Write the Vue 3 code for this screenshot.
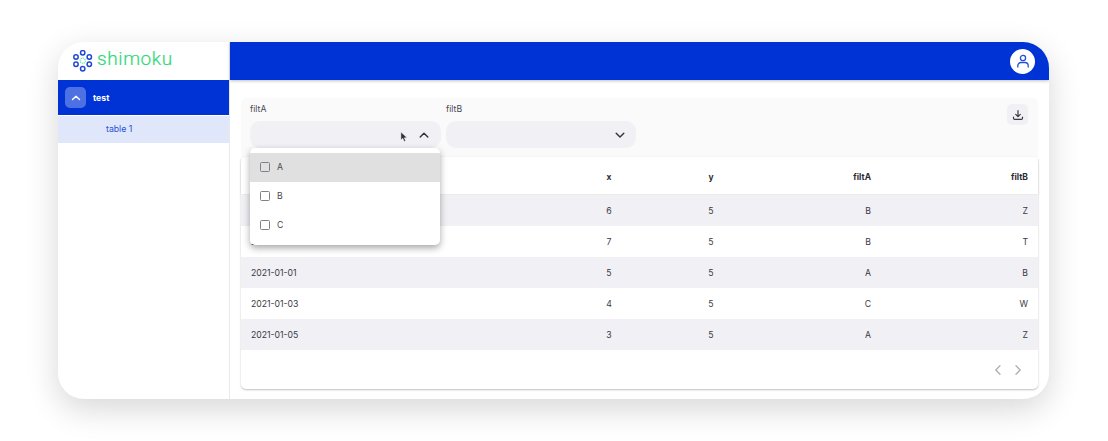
<script setup>
const rows = [
  { date: '2021-01-02', x: 6, y: 5, a: 'B', b: 'Z' },
  { date: '2021-01-04', x: 7, y: 5, a: 'B', b: 'T' },
  { date: '2021-01-01', x: 5, y: 5, a: 'A', b: 'B' },
  { date: '2021-01-03', x: 4, y: 5, a: 'C', b: 'W' },
  { date: '2021-01-05', x: 3, y: 5, a: 'A', b: 'Z' },
]
const options = ['A', 'B', 'C']
const rings = [[10.7, 2.7], [17.3, 7], [17.3, 14.3], [10.7, 18.7], [4, 14.3], [4, 7]]
</script>

<template>
  <div class="stage">
    <div class="window">
      <aside class="sidebar">
        <div class="logo">
          <svg class="logo-mark" width="22" height="22" viewBox="0 0 22 22" fill="none">
            <circle v-for="(r, i) in rings" :key="i" :cx="r[0]" :cy="r[1]" r="2.2" stroke="#1f48d4" stroke-width="1.5" />
            <circle cx="10.7" cy="10.7" r="2.6" stroke="#3ddc84" stroke-width="1.1" stroke-dasharray="1 1" />
          </svg>
          <span class="logo-text">shimoku</span>
        </div>
        <div class="nav-head">
          <span class="nav-toggle">
            <svg width="12" height="12" viewBox="0 0 12 12" fill="none"><path d="M2.5 7.5 6 4.200l3.500 3.300" stroke="#fff" stroke-width="1.400" stroke-linecap="round" stroke-linejoin="round" /></svg>
          </span>
          <span class="nav-title">test</span>
        </div>
        <div class="nav-item">table 1</div>
      </aside>

      <div class="main">
        <header class="topbar">
          <span class="avatar">
            <svg width="16" height="16" viewBox="0 0 16 16" fill="none">
              <circle cx="8" cy="5" r="2.600" stroke="#2450d8" stroke-width="1.300" />
              <path d="M2.800 14v-1.300A3.200 3.200 0 0 1 6 9.500h4a3.200 3.200 0 0 1 3.200 3.200V14" stroke="#2450d8" stroke-width="1.300" stroke-linecap="round" />
            </svg>
          </span>
        </header>

        <main class="content">
          <section class="filters">
            <div class="filter">
              <label class="filter-label">filtA</label>
              <div class="select">
                <svg class="cursor" width="8" height="12" viewBox="0 0 9 13"><path d="M1 1v9l2.200-2 1.500 3.500 1.600-.7L4.800 7.400H8z" fill="#333" stroke="#fff" stroke-width=".5" /></svg>
                <svg class="chev" width="14" height="14" viewBox="0 0 14 14" fill="none"><path d="M3.200 9 7 5.200 10.800 9" stroke="#333" stroke-width="1.400" stroke-linecap="round" stroke-linejoin="round" /></svg>
              </div>
              <ul class="menu">
                <li v-for="(o, i) in options" :key="o" class="option" :class="{ active: i === 0 }">
                  <span class="check"></span>{{ o }}
                </li>
              </ul>
            </div>
            <div class="filter second">
              <label class="filter-label">filtB</label>
              <div class="select">
                <svg class="chev" width="14" height="14" viewBox="0 0 14 14" fill="none"><path d="M3.200 5.200 7 9l3.800-3.800" stroke="#333" stroke-width="1.400" stroke-linecap="round" stroke-linejoin="round" /></svg>
              </div>
            </div>
            <button class="download" aria-label="download">
              <svg width="12" height="12" viewBox="0 0 12 12" fill="none">
                <path d="M6 1.500v6M3.700 5.300 6 7.600l2.300-2.300M1.500 8v1.200c0 .7.500 1.200 1.200 1.200h6.600c.7 0 1.200-.5 1.200-1.200V8" stroke="#3a3a44" stroke-width="1.200" stroke-linecap="round" stroke-linejoin="round" />
              </svg>
            </button>
          </section>

          <section class="card">
            <div class="row head">
              <span class="l">date</span><span class="c">x</span><span class="c">y</span><span class="r">filtA</span><span class="r">filtB</span>
            </div>
            <div v-for="(row, i) in rows" :key="i" class="row" :class="{ odd: i % 2 === 0 }">
              <span class="l">{{ row.date }}</span><span class="c">{{ row.x }}</span><span class="c">{{ row.y }}</span><span class="r">{{ row.a }}</span><span class="r">{{ row.b }}</span>
            </div>
            <footer class="pager">
              <svg width="12" height="12" viewBox="0 0 12 12" fill="none"><path d="M8 1.800 3.800 6 8 10.200" stroke="#aeaeb4" stroke-width="1.300" stroke-linecap="round" stroke-linejoin="round" /></svg>
              <svg width="12" height="12" viewBox="0 0 12 12" fill="none"><path d="M4 1.800 8.200 6 4 10.200" stroke="#aeaeb4" stroke-width="1.300" stroke-linecap="round" stroke-linejoin="round" /></svg>
            </footer>
          </section>
        </main>
      </div>
    </div>
  </div>
</template>

<style>
html, body { margin: 0; background: #fff; }
</style>

<style scoped>
.stage {
  width: 1108px;
  height: 441px;
  box-sizing: border-box;
  padding: 42px 59px 42px 58px;
  overflow: hidden;
  font-family: Inter, "Liberation Sans", sans-serif;
  font-size: 8.700px;
  color: #3a3a44;
}
.window {
  display: flex;
  height: 357px;
  background: #fff;
  border-radius: 26px;
  overflow: hidden;
  box-shadow: 0 10px 32px rgba(0, 0, 0, 0.16);
}
.sidebar {
  width: 171px;
  flex: none;
  border-right: 1px solid #e9e9ec;
}
.logo {
  height: 38px;
  display: flex;
  align-items: center;
  padding-left: 14px;
  gap: 3px;
}
.logo-mark { margin-top: -1px; }
.logo-text {
  font-family: Roboto, sans-serif;
  font-size: 19px;
  font-weight: 300;
  line-height: 1;
  letter-spacing: 0.600px;
  color: #2fd877;
  margin-top: -5px;
  -webkit-text-stroke: 0.2px #2fd877;
}
.nav-head {
  height: 35px;
  display: flex;
  align-items: center;
  background: #0033d6;
  padding-left: 7px;
  gap: 7px;
  color: #fff;
  font-weight: 700;
}
.nav-toggle {
  width: 21px;
  height: 21px;
  display: flex;
  align-items: center;
  justify-content: center;
  border-radius: 5px;
  background: rgba(255, 255, 255, 0.3);
}
.nav-item {
  margin-top: 1px;
  height: 27px;
  line-height: 26px;
  padding-left: 48px;
  background: #e1e7fb;
  color: #2450d8;
}
.main {
  flex: 1;
  min-width: 0;
  display: flex;
  flex-direction: column;
}
.topbar {
  height: 38px;
  flex: none;
  background: #0033d6;
  display: flex;
  align-items: center;
  justify-content: flex-end;
  padding-right: 14px;
  box-shadow: 0 1px 3px rgba(0, 0, 0, 0.25);
  position: relative;
}
.avatar {
  width: 25px;
  height: 25px;
  border-radius: 50%;
  background: #fff;
  display: flex;
  align-items: center;
  justify-content: center;
}
.content {
  flex: 1;
  padding: 18px 11px 10px;
  display: flex;
  flex-direction: column;
}
.filters {
  height: 59px;
  box-sizing: border-box;
  flex: none;
  display: flex;
  gap: 5px;
  padding: 6px 10px 0 9px;
  background: #fafafb;
  border-radius: 5px 5px 0 0;
}
.filter {
  width: 191px;
  position: relative;
}
.filter.second { width: 190px; }
.filter-label {
  display: block;
  height: 11px;
  line-height: 11px;
  margin-bottom: 6px;
  color: #4a4a52;
}
.select {
  height: 27px;
  border-radius: 10px;
  background: #f0f0f5;
  position: relative;
  display: flex;
  align-items: center;
  justify-content: flex-end;
  padding-right: 10px;
}
.second .select { padding-right: 9px; }
.cursor {
  position: absolute;
  left: 150px;
  top: 10px;
}
.menu {
  position: absolute;
  z-index: 5;
  left: 0;
  top: 44px;
  width: 190px;
  margin: 0;
  padding: 5px 0;
  list-style: none;
  background: #fff;
  border-radius: 5px;
  box-shadow: 0 3px 7px rgba(0, 0, 0, 0.35);
}
.option {
  height: 29px;
  display: flex;
  align-items: center;
  padding-left: 10px;
  gap: 7px;
  padding-bottom: 1px;
  box-sizing: border-box;
  color: #4a4a52;
}
.option.active { background: #e0e0e0; }
.check {
  width: 8px;
  height: 8px;
  border: 1.500px solid #808086;
  border-radius: 1.500px;
  flex: none;
}
.download {
  margin-left: auto;
  width: 21px;
  height: 21px;
  padding: 0;
  border: 0;
  border-radius: 5px;
  background: #f0f0f5;
  display: flex;
  align-items: center;
  justify-content: center;
}
.card {
  flex: 1;
  display: flex;
  flex-direction: column;
  background: #fff;
  border-radius: 5px;
  box-shadow: 0 1px 2px rgba(0, 0, 0, 0.25);
}
.row {
  display: grid;
  grid-template-columns: 317px 102px 102px 118px 158px;
  align-items: center;
  height: 31px;
}
.l { padding-left: 10px; }
.row.odd { background: #f0f0f5; }
.row.head {
  height: 37px;
  box-sizing: border-box;
  padding-top: 2px;
  margin-bottom: 1px;
  font-size: 8.500px;
  font-weight: 700;
  color: #2b2b33;
  box-shadow: 0 1px 2px rgba(0, 0, 0, 0.12);
}
.c { text-align: center; }
.r { text-align: right; padding-right: 10px; }
.r:nth-child(4) { padding-right: 9px; }
.pager {
  flex: 1;
  display: flex;
  align-items: center;
  justify-content: flex-end;
  gap: 8px;
  padding-right: 14px;
}
</style>
